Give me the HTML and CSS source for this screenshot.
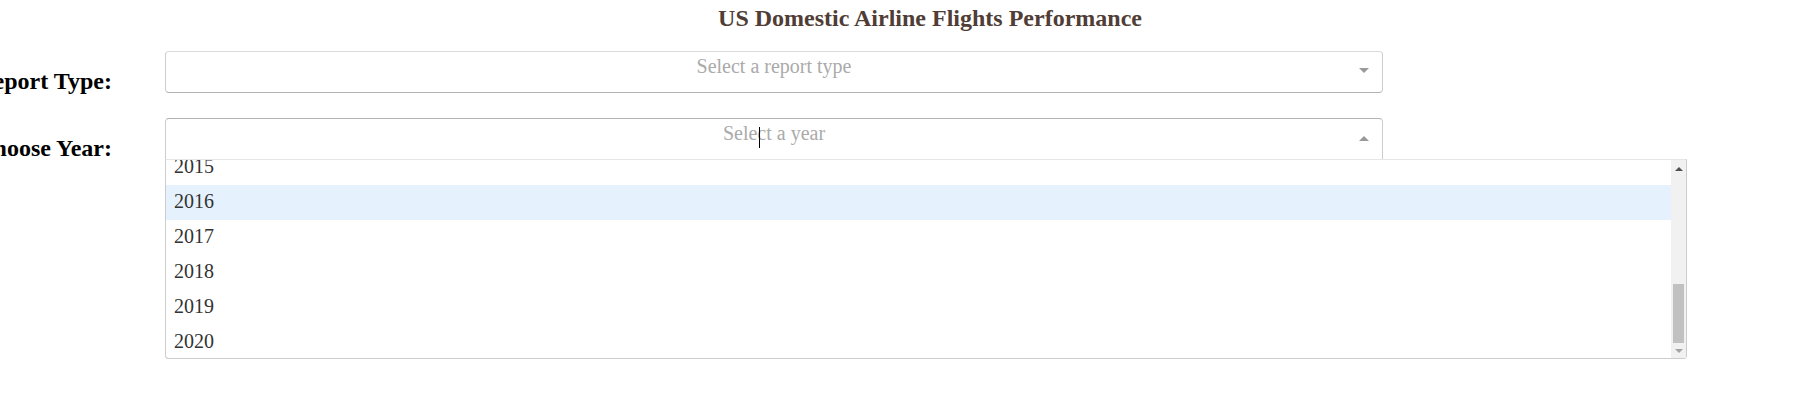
FILE: index.html
```html
<!DOCTYPE html>
<html>
<head>
<meta charset="utf-8">
<title>US Domestic Airline Flights Performance</title>
<link rel="stylesheet" href="styles.css">
</head>
<body>
<h1 class="title">US Domestic Airline Flights Performance</h1>

<div class="row row-type">
  <div class="label"><h2>Report Type:</h2></div>
  <div class="select">
    <div class="control">
      <span class="placeholder">Select a report type</span>
      <span class="arrow arrow-down"></span>
    </div>
  </div>
</div>

<div class="row row-year">
  <div class="label"><h2>Choose Year:</h2></div>
  <div class="select select-open">
    <div class="control control-open">
      <span class="placeholder">Select a year</span>
      <span class="caret"></span>
      <span class="arrow arrow-up"></span>
    </div>
    <div class="menu">
      <div class="options">
        <div class="options-inner">
          <div class="option">2015</div>
          <div class="option focused">2016</div>
          <div class="option">2017</div>
          <div class="option">2018</div>
          <div class="option">2019</div>
          <div class="option">2020</div>
        </div>
      </div>
      <div class="scrollbar">
        <div class="sb-btn"><span class="sb-arrow sb-up"></span></div>
        <div class="sb-track"><div class="sb-thumb"></div></div>
        <div class="sb-btn"><span class="sb-arrow sb-down"></span></div>
      </div>
    </div>
  </div>
</div>
</body>
</html>
```

FILE: styles.css
```css
html, body {
  margin: 0;
  padding: 0;
  background: #fff;
}

body {
  font-family: "Liberation Serif", "Times New Roman", serif;
  overflow: hidden;
}

.title {
  margin: 0 0 0 44px;
  padding-top: 4px;
  font-size: 24px;
  line-height: 28px;
  font-weight: bold;
  color: #503D36;
  text-align: center;
}

.row {
  display: flex;
  align-items: flex-start;
}

.row-type {
  margin-top: 19px;
}

.row-year {
  margin-top: 22px;
}

.label {
  flex: 0 0 112px;
  width: 112px;
  height: 45px;
  display: flex;
  justify-content: flex-end;
  margin-right: 53px;
}

.label h2 {
  margin: 16px 0 0;
  font-size: 24px;
  line-height: 28px;
  font-weight: bold;
  white-space: nowrap;
  color: #000;
}

.select {
  flex: 0 0 auto;
}

.select-open {
  width: 1522px;
}

.control {
  box-sizing: border-box;
  width: 1218px;
  height: 42px;
  border: 1px solid;
  border-color: #d9d9d9 #ccc #b3b3b3;
  border-radius: 4px;
  background: #fff;
  display: grid;
  grid-template-columns: 1fr;
  grid-template-rows: 1fr;
}

.control > * {
  grid-area: 1 / 1;
}

.control-open {
  border-color: #b3b3b3 #ccc #d9d9d9;
  border-bottom-left-radius: 0;
  border-bottom-right-radius: 0;
}

.placeholder {
  text-align: center;
  font-size: 20px;
  line-height: 28px;
  color: #aaa;
}

.arrow {
  justify-self: end;
  align-self: start;
  width: 0;
  height: 0;
  border-style: solid;
  margin-right: 13px;
}

.arrow-down {
  border-width: 5px 5px 0;
  border-color: #999 transparent transparent;
  margin-top: 16px;
}

.arrow-up {
  border-width: 0 5px 5px;
  border-color: transparent transparent #999;
  margin-top: 17px;
}

.caret {
  justify-self: start;
  align-self: start;
  width: 1px;
  height: 21px;
  background: #000;
  margin-left: 593px;
  margin-top: 8px;
}

.menu {
  box-sizing: border-box;
  width: 1522px;
  height: 200px;
  margin-top: -1px;
  border: 1px solid #ccc;
  border-top-color: #e6e6e6;
  border-radius: 0 0 4px 4px;
  box-shadow: 0 1px 0 rgba(0, 0, 0, 0.06);
  background: #fff;
  display: flex;
}

.options {
  flex: 1 1 auto;
  height: 198px;
  overflow: hidden;
}

.options-inner {
  margin-top: -10px;
}

.option {
  height: 35px;
  box-sizing: border-box;
  line-height: 33px;
  padding: 0 0 2px 8px;
  font-size: 20px;
  color: #333;
}

.option.focused {
  background: #e5f2fd;
}

.scrollbar {
  flex: 0 0 15px;
  height: 198px;
  display: flex;
  flex-direction: column;
  background: #f1f1f1;
}

.sb-btn {
  flex: 0 0 15px;
  display: flex;
  align-items: center;
  justify-content: center;
}

.sb-track {
  flex: 1 1 auto;
  display: flex;
  flex-direction: column;
  justify-content: flex-end;
  align-items: center;
}

.sb-thumb {
  width: 11px;
  height: 59px;
  background: #c1c1c1;
}

.sb-arrow {
  width: 0;
  height: 0;
  border-style: solid;
}

.sb-up {
  border-width: 0 4px 4px;
  border-color: transparent transparent #505050;
  margin-top: 3px;
}

.sb-down {
  border-width: 4px 4px 0;
  border-color: #a3a3a3 transparent transparent;
}
```
